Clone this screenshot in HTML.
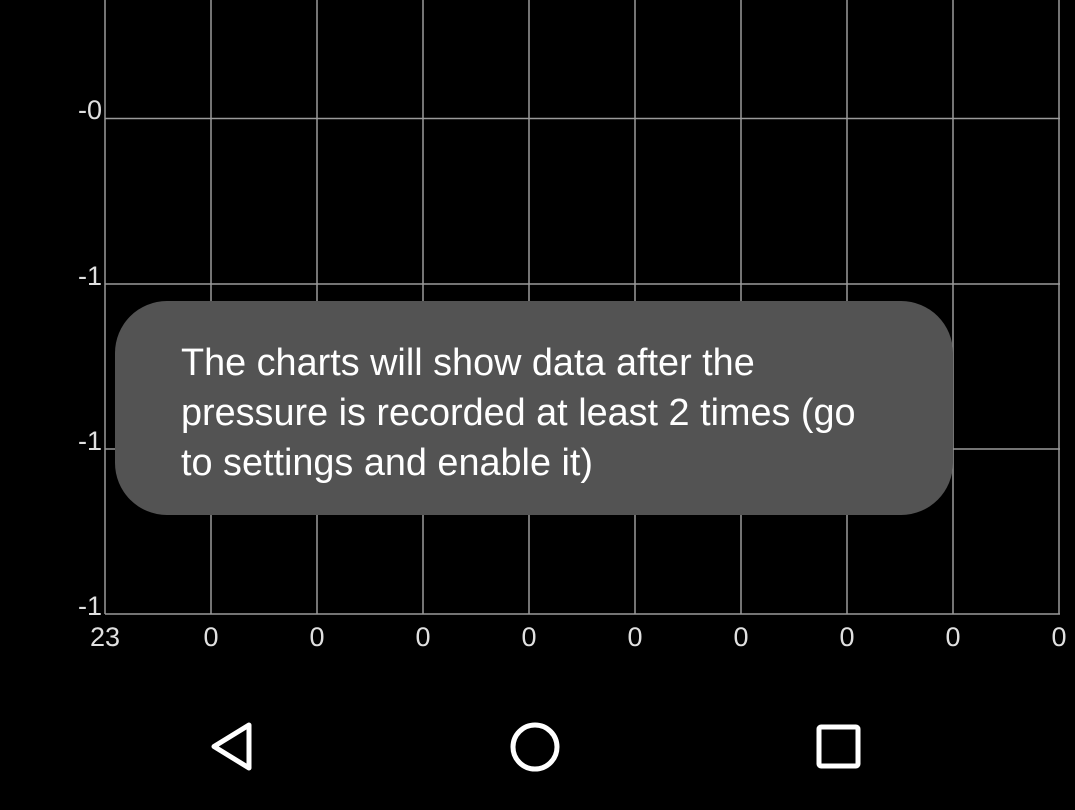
<!DOCTYPE html>
<html><head><style>
html,body{margin:0;padding:0;background:#000;width:1075px;height:810px;overflow:hidden}
svg text{font-family:"Liberation Sans",sans-serif}
.toast{position:absolute;left:115px;top:301px;width:838px;height:214px;background:#535353;border-radius:52px}
.tt{position:absolute;left:181px;top:338px;color:#fff;font-family:"Liberation Sans",sans-serif;font-size:38px;line-height:50px;white-space:nowrap;transform:scaleX(0.995);transform-origin:left top}
</style></head><body>
<svg width="1075" height="810" style="position:absolute;left:0;top:0">
<g stroke="#9a9a9a" stroke-width="1.5">
<line x1="105" y1="0" x2="105" y2="614"/><line x1="211" y1="0" x2="211" y2="614"/><line x1="317" y1="0" x2="317" y2="614"/><line x1="423" y1="0" x2="423" y2="614"/><line x1="529" y1="0" x2="529" y2="614"/><line x1="635" y1="0" x2="635" y2="614"/><line x1="741" y1="0" x2="741" y2="614"/><line x1="847" y1="0" x2="847" y2="614"/><line x1="953" y1="0" x2="953" y2="614"/><line x1="1059" y1="0" x2="1059" y2="614"/>
<line x1="105" y1="118.5" x2="1060" y2="118.5"/><line x1="105" y1="284" x2="1060" y2="284"/><line x1="105" y1="449" x2="1060" y2="449"/><line x1="105" y1="614" x2="1060" y2="614"/>
</g>
<g fill="#e0e0e0" font-size="27">
<text x="102" y="119" text-anchor="end">-0</text>
<text x="102" y="285" text-anchor="end">-1</text>
<text x="102" y="450" text-anchor="end">-1</text>
<text x="102" y="615" text-anchor="end">-1</text>
<g text-anchor="middle">
<text x="105" y="646">23</text><text x="211" y="646">0</text><text x="317" y="646">0</text><text x="423" y="646">0</text><text x="529" y="646">0</text><text x="635" y="646">0</text><text x="741" y="646">0</text><text x="847" y="646">0</text><text x="953" y="646">0</text><text x="1059" y="646">0</text>
</g></g>
<g fill="none" stroke="#fff" stroke-width="5" stroke-linejoin="round">
<path d="M249 725 L249 768 L214 746.5 Z"/>
<circle cx="535" cy="747" r="22"/>
<rect x="819" y="727" width="39" height="39" rx="2"/>
</g>
</svg>
<div class="toast"></div>
<div class="tt">The charts will show data after the<br>pressure is recorded at least 2 times (go<br>to settings and enable it)</div>
</body></html>
